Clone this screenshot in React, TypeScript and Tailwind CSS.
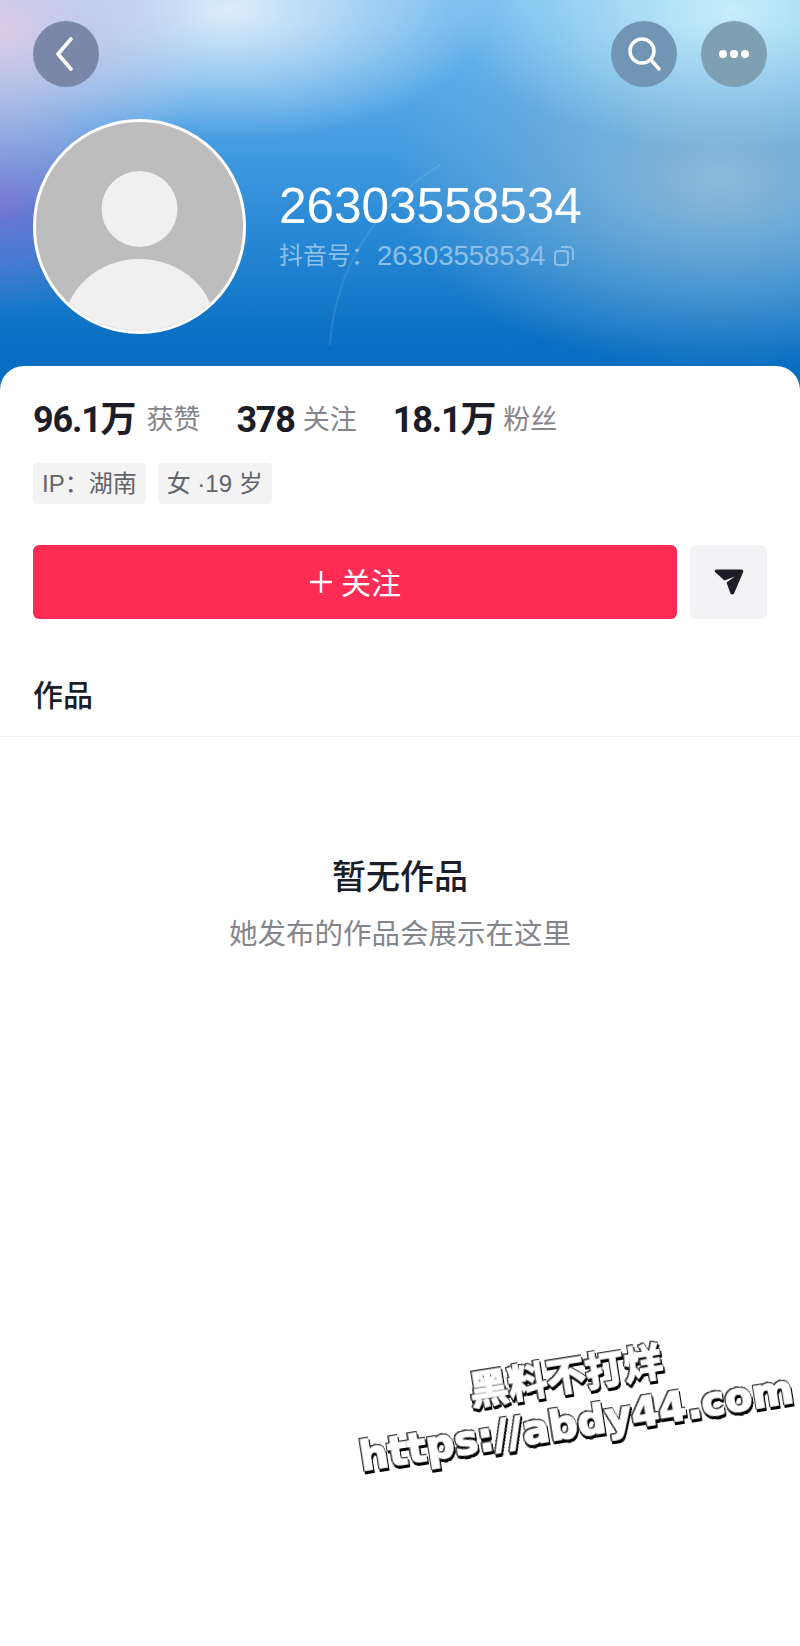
import React from 'react';

const CJK = "font-['Liberation_Sans','Noto_Sans_CJK_SC',sans-serif]";

const RoundButton: React.FC<{ className: string; children: React.ReactNode }> = ({ className, children }) => (
  <div className={`w-[66px] h-[66px] rounded-full flex items-center justify-center ${className}`}>
    {children}
  </div>
);

const Stat: React.FC<{ value: string; label: string; className?: string }> = ({ value, label, className = 'gap-[8px]' }) => (
  <div className={`flex items-center ${className}`}>
    <span className="font-['Roboto','Noto_Sans_CJK_SC',sans-serif] font-bold text-[36px] leading-[44px] tracking-[-1.2px] text-[#1c1d26]">
      {value}
    </span>
    <span className="text-[27px] leading-[44px] text-[#85868c]">{label}</span>
  </div>
);

const Tag: React.FC<{ children: React.ReactNode }> = ({ children }) => (
  <div className="h-[41px] px-[9px] flex items-center rounded-[4px] bg-[#f3f3f4] text-[24px] text-[#62636b]">
    {children}
  </div>
);

export default function App() {
  return (
    <div className={`relative w-[800px] h-[1646px] overflow-hidden bg-white ${CJK}`}>
      {/* header backdrop */}
      <div className="relative h-[390px] px-[33px] pt-[21px] bg-[radial-gradient(ellipse_210px_190px_at_0px_30px,#dccbe8_0%,rgba(220,203,232,0)_100%),radial-gradient(ellipse_260px_130px_at_230px_10px,#dcecfb_0%,rgba(220,236,251,0)_100%),radial-gradient(ellipse_280px_140px_at_730px_10px,#c6eefb_0%,rgba(198,238,251,0)_100%),radial-gradient(ellipse_150px_110px_at_0px_205px,#6f72d0_0%,rgba(111,114,208,0)_100%),radial-gradient(ellipse_330px_190px_at_720px_180px,#8cb9d8_0%,rgba(140,185,216,0)_100%),linear-gradient(180deg,#74bbee_0%,#4ea2e4_30%,#2a8ad6_58%,#0a6fc2_88%,#086cc0_100%)]">
        <svg className="absolute left-0 top-0" width="800" height="390" viewBox="0 0 800 390" fill="none">
          <path d="M330 345 C335 270 375 205 440 165" stroke="#bfe0f7" strokeOpacity="0.14" strokeWidth="2" />
        </svg>
        <div className="relative flex justify-between">
          <RoundButton className="bg-[#7b87a8]">
            <svg width="26" height="38" viewBox="0 0 26 38" fill="none" stroke="#fff" strokeWidth="3.6" strokeLinecap="round" strokeLinejoin="round">
              <path d="M18 4 L5 19 L18 34" />
            </svg>
          </RoundButton>
          <div className="flex gap-[24px]">
            <RoundButton className="bg-[#7195b5]">
              <svg width="36" height="36" viewBox="0 0 36 36" fill="none" stroke="#fff" strokeWidth="3.4" strokeLinecap="round">
                <circle cx="16" cy="15" r="12" />
                <path d="M25 24 L33 33" />
              </svg>
            </RoundButton>
            <RoundButton className="bg-[#7f9fb2]">
              <div className="flex gap-[3px]">
                <span className="w-[8px] h-[8px] rounded-full bg-white" />
                <span className="w-[8px] h-[8px] rounded-full bg-white" />
                <span className="w-[8px] h-[8px] rounded-full bg-white" />
              </div>
            </RoundButton>
          </div>
        </div>

        <div className="relative mt-[32px] flex items-center gap-[33px]">
          <div className="w-[213px] h-[215px] rounded-full border-[3px] border-white overflow-hidden bg-[#bdbdbd] shrink-0">
            <svg width="207" height="209" viewBox="0 0 207 209">
              <ellipse cx="103.500" cy="87" rx="38" ry="38" fill="#f0f0f0" />
              <ellipse cx="103.500" cy="207" rx="76" ry="70" fill="#f0f0f0" />
            </svg>
          </div>
          <div className="mb-[3px]">
            <div className="text-[49.500px] leading-[56px] text-white">26303558534</div>
            <div className="mt-[6px] flex items-center text-[#8cc0e8]">
              <span className="text-[24px] leading-[32px] w-[98px]">抖音号：</span>
              <span className="text-[27.500px] leading-[32px]">26303558534</span>
              <svg className="ml-[8px]" width="22" height="22" viewBox="0 0 22 22" fill="none" stroke="#8cc0e8" strokeWidth="2">
                <rect x="2" y="6" width="13" height="14" rx="3" />
                <path d="M8 2 H16 a4 4 0 0 1 4 4 V15" />
              </svg>
            </div>
          </div>
        </div>
      </div>

      {/* white card */}
      <div className="relative -mt-[24px] rounded-t-[24px] bg-white">
        <div className="px-[33px] pt-[32px]">
          <div className="flex gap-[36px]">
            <Stat value="96.1万" label="获赞" className="gap-[11px]" />
            <Stat value="378" label="关注" />
            <Stat value="18.1万" label="粉丝" />
          </div>
          <div className="mt-[21px] flex gap-[12px]">
            <Tag>IP：湖南</Tag>
            <Tag>女 ·19 岁</Tag>
          </div>
          <div className="mt-[41px] flex gap-[13px]">
            <div className="w-[644px] h-[74px] rounded-[6px] bg-[#fe2c55] flex items-center justify-center gap-[8px] text-white text-[30px]">
              <svg width="24" height="24" viewBox="0 0 24 24" stroke="#fff" strokeWidth="2.4">
                <path d="M12 1 V23 M1 12 H23" />
              </svg>
              <span className="mt-[3px]">关注</span>
            </div>
            <div className="w-[77px] h-[74px] rounded-[6px] bg-[#f3f3f5] flex items-center justify-center">
              <svg width="30" height="26" viewBox="0 0 30 26" fill="#1c1d26">
                <path d="M1 3 Q0 0.500 3 0.500 L27.500 0.500 Q30 0.500 29 3.500 L20 24.500 Q18.500 26.500 16.500 24.500 L12.500 13.500 L21 7.500 L10.500 11.500 Z" />
              </svg>
            </div>
          </div>
          <div className="mt-[59px] text-[30px] leading-[36px] font-medium text-[#1c1d26]">作品</div>
        </div>
        <div className="mt-[22px] h-[1px] bg-[#f2f2f3]" />

        <div className="mt-[117px] flex flex-col items-center">
          <div className="text-[34px] leading-[46px] font-medium text-[#1c1d26]">暂无作品</div>
          <div className="mt-[13px] text-[28.500px] leading-[42px] text-[#85868c]">她发布的作品会展示在这里</div>
        </div>
      </div>

      {/* watermark sits over the page */}
      <div className="absolute left-[338px] top-[1354px] w-[470px] -rotate-[9deg] flex flex-col items-center font-['DejaVu_Sans','Noto_Sans_CJK_SC',sans-serif] font-bold text-white [-webkit-text-stroke:1.500px_#fff] [filter:drop-shadow(0.6px_0_0_#333)_drop-shadow(-0.6px_0_0_#333)_drop-shadow(0_0.6px_0_#333)_drop-shadow(0_-0.6px_0_#333)_drop-shadow(1px_3px_0_#000)]">
        <div className="text-[39px] leading-[44px] ml-[-6px] whitespace-nowrap">黑料不打烊</div>
        <div className="text-[40px] leading-[50px] whitespace-nowrap">https://abdy44.com</div>
      </div>
    </div>
  );
}
